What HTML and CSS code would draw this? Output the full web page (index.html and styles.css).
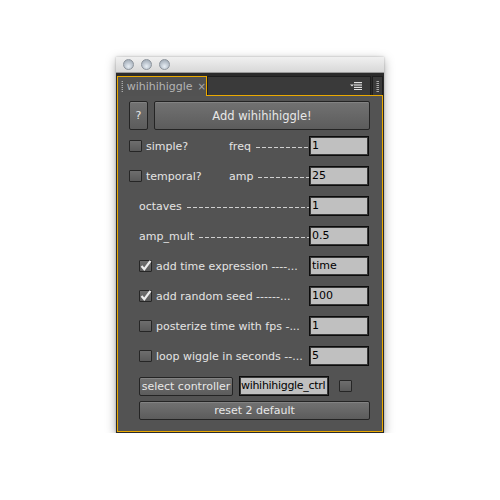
FILE: index.html
```html
<!DOCTYPE html>
<html>
<head>
<meta charset="utf-8">
<link rel="stylesheet" href="styles.css">
</head>
<body>
<div class="window">
  <div class="titlebar">
    <span class="light"></span><span class="light"></span><span class="light"></span>
  </div>
  <div class="tabbar">
    <div class="tab">
      <span class="grip"></span>
      <span class="tab-title">wihihihiggle</span>
      <span class="tab-close">×</span>
    </div>
    <div class="tabfill">
      <svg class="menu-icon" width="12" height="8" viewBox="0 0 12 8">
        <path d="M0 2.5h4l-2 2z" fill="#e0e0e0"/>
        <rect x="4" y="0" width="8" height="1.2" fill="#e0e0e0"/>
        <rect x="4" y="2.4" width="8" height="1.2" fill="#e0e0e0"/>
        <rect x="4" y="4.8" width="8" height="1.2" fill="#e0e0e0"/>
        <rect x="4" y="7" width="8" height="1" fill="#e0e0e0"/>
      </svg>
    </div>
    <div class="grip-box"><span class="grip"></span></div>
  </div>
  <div class="panel">
    <div class="head">
      <button class="btn btn-q">?</button>
      <button class="btn btn-add">Add wihihihiggle!</button>
    </div>

    <div class="row two">
      <label class="check"><span class="box"></span><span>simple?</span></label>
      <span class="lead"><span>freq</span><span class="fill"></span></span>
      <input class="field" value="1">
    </div>
    <div class="row two">
      <label class="check"><span class="box"></span><span>temporal?</span></label>
      <span class="lead"><span>amp</span><span class="fill"></span></span>
      <input class="field" value="25">
    </div>

    <div class="row indent one">
      <span class="lead"><span>octaves</span><span class="fill"></span></span>
      <input class="field" value="1">
    </div>
    <div class="row indent one">
      <span class="lead"><span>amp_mult</span><span class="fill"></span></span>
      <input class="field" value="0.5">
    </div>

    <div class="row indent one">
      <label class="check"><span class="box checked"><svg width="12" height="11" viewBox="0 0 12 11"><path d="M1.5 6l2.8 3.2 6.2-8.4" fill="none" stroke="#ececec" stroke-width="2.2"/></svg></span><span>add time expression ----...</span></label>
      <input class="field" value="time">
    </div>
    <div class="row indent one">
      <label class="check"><span class="box checked"><svg width="12" height="11" viewBox="0 0 12 11"><path d="M1.5 6l2.8 3.2 6.2-8.4" fill="none" stroke="#ececec" stroke-width="2.2"/></svg></span><span>add random seed ------...</span></label>
      <input class="field" value="100">
    </div>
    <div class="row indent one">
      <label class="check"><span class="box"></span><span>posterize time with fps -...</span></label>
      <input class="field" value="1">
    </div>
    <div class="row indent one">
      <label class="check"><span class="box"></span><span>loop wiggle in seconds --...</span></label>
      <input class="field" value="5">
    </div>

    <div class="row indent ctrl">
      <button class="btn btn-sel">select controller</button>
      <input class="field field-ctrl" value="wihihihiggle_ctrl">
      <span class="box"></span>
    </div>
    <div class="row indent reset">
      <button class="btn btn-reset">reset 2 default</button>
    </div>
  </div>
</div>
</body>
</html>
```
FILE: styles.css
```css
html, body {
  margin: 0;
  padding: 0;
  background: #ffffff;
}
body {
  font-family: "DejaVu Sans", "Liberation Sans", sans-serif;
  font-size: 11px;
  color: #e4e4e4;
}
.window {
  width: 268px;
  margin: 57px 0 0 116px;
  background: #2a2a2a;
  box-shadow: 0 3px 10px rgba(0,0,0,0.35), 0 0 2px rgba(0,0,0,0.25);
  padding-bottom: 1px;
}
.titlebar {
  height: 16px;
  background: linear-gradient(#f0f0f0, #d8d8d8);
  border-bottom: 1px solid #9a9a9a;
  box-sizing: border-box;
  display: flex;
  align-items: center;
  gap: 7px;
  padding-left: 7px;
}
.light {
  width: 11px;
  height: 11px;
  border-radius: 50%;
  box-sizing: border-box;
  border: 1px solid #8d949c;
  background: radial-gradient(circle at 50% 70%, #e8eef4 0%, #b9c2cc 55%, #98a2ad 100%);
}
.tabbar {
  height: 22px;
  display: flex;
  align-items: flex-end;
  background: #2b2b2b;
  padding: 0 1px;
}
.tab {
  position: relative;
  z-index: 1;
  width: 90px;
  height: 20px;
  box-sizing: border-box;
  margin-bottom: -1px;
  background: #525252;
  border: 1px solid #eaa900;
  border-bottom: none;
  display: flex;
  align-items: center;
  padding-left: 3px;
}
.grip {
  width: 2px;
  height: 11px;
  background-image: repeating-linear-gradient(#aaaaaa 0 1px, transparent 1px 2px);
  border-left: 1px dotted #777;
}
.tab-title {
  margin-left: 4px;
  font-size: 11px;
  color: #b4b4b4;
}
.tab-close {
  margin-left: 5px;
  font-size: 10px;
  color: #a8a8a8;
}
.tabfill {
  flex: 1;
  height: 19px;
  box-sizing: border-box;
  background: #3a3a3a;
  border: 1px solid #1e1e1e;
  border-bottom: none;
  display: flex;
  align-items: center;
  justify-content: flex-end;
  padding-right: 8px;
}
.grip-box {
  width: 11px;
  height: 19px;
  box-sizing: border-box;
  background: #3a3a3a;
  border: 1px solid #1e1e1e;
  border-bottom: none;
  margin-left: 1px;
  display: flex;
  align-items: center;
  justify-content: center;
}
.panel {
  margin: 0 1px;
  background: #535353;
  border: 1px solid #eaa900;
  padding: 5px 12px 11px 11px;
  display: flex;
  flex-direction: column;
  gap: 10px;
}
.head {
  display: flex;
  gap: 6px;
  height: 29px;
  margin-bottom: -4px;
}
.btn {
  font-family: "DejaVu Sans", "Liberation Sans", sans-serif;
  font-size: 11px;
  color: #e8e8e8;
  background: linear-gradient(#727272, #5c5c5c);
  border: 1px solid #242424;
  border-radius: 2px;
  padding: 0;
  margin: 0;
  box-shadow: inset 0 1px 0 rgba(255,255,255,0.12);
}
.btn-q {
  width: 19px;
}
.btn-add {
  flex: 1;
  font-size: 11.5px;
}
.row {
  height: 20px;
  display: grid;
  align-items: center;
}
.two {
  grid-template-columns: 100px 80px 60px;
}
.indent {
  margin-left: 10px;
}
.one {
  grid-template-columns: 170px 60px;
}
.check {
  display: flex;
  align-items: center;
  gap: 4px;
  white-space: nowrap;
}
.box {
  width: 13px;
  height: 12px;
  box-sizing: border-box;
  flex: none;
  border: 1px solid #262626;
  border-radius: 1px;
  background: linear-gradient(#6e6e6e, #5a5a5a);
  display: flex;
  align-items: center;
  justify-content: center;
}
.box svg {
  flex: none;
  margin-top: -2px;
  margin-left: 1px;
}
.lead {
  display: flex;
  align-items: center;
  gap: 5px;
  white-space: nowrap;
}
.fill {
  flex: 1;
  height: 1px;
  margin-top: 2px;
  background: repeating-linear-gradient(to right, #d0d0d0 0 4px, transparent 4px 6px);
}
.field {
  width: 60px;
  height: 20px;
  box-sizing: border-box;
  margin: 0;
  padding: 0 2px 2px;
  border: 1px solid #0c0c0c;
  box-shadow: inset 0 0 0 1px #3a3a3a;
  background: #c0c0c0;
  color: #000;
  font-family: "DejaVu Sans", "Liberation Sans", sans-serif;
  font-size: 11px;
}
.ctrl {
  display: flex;
  align-items: center;
}
.btn-sel {
  width: 94px;
  height: 19px;
}
.field-ctrl {
  width: 90px;
  margin-left: 6px;
  padding: 0 1px 2px;
  letter-spacing: -0.3px;
}
.ctrl .box {
  margin-left: 10px;
}
.reset {
  margin-top: -5px;
  display: flex;
  height: 19px;
}
.btn-reset {
  flex: 1;
  height: 19px;
}
```
